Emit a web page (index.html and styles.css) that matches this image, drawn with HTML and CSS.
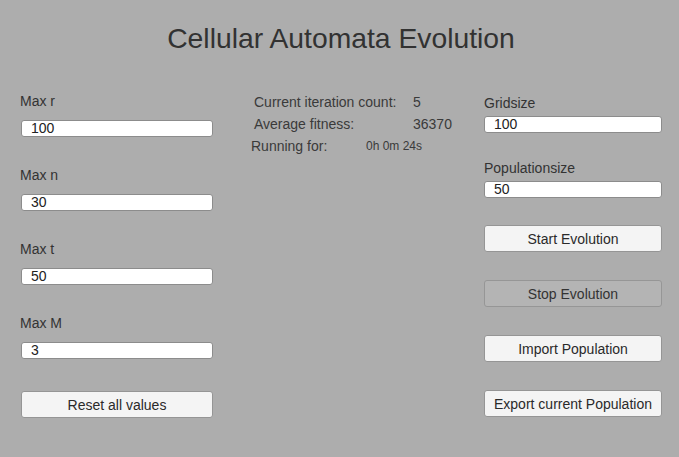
FILE: index.html
```html
<!DOCTYPE html>
<html>
<head>
<meta charset="utf-8">
<link rel="stylesheet" href="styles.css">
</head>
<body>
<div class="app">
  <h1 class="title">Cellular Automata Evolution</h1>
  <div class="main">
    <div class="col-left">
      <div class="field">
        <div class="label">Max r</div>
        <div class="input">100</div>
      </div>
      <div class="field">
        <div class="label">Max n</div>
        <div class="input">30</div>
      </div>
      <div class="field">
        <div class="label">Max t</div>
        <div class="input">50</div>
      </div>
      <div class="field">
        <div class="label">Max M</div>
        <div class="input">3</div>
      </div>
      <div class="btn btn-reset">Reset all values</div>
    </div>
    <div class="col-mid">
      <div class="stat stat-a"><span class="stat-k">Current iteration count:</span><span class="stat-v">5</span></div>
      <div class="stat stat-a"><span class="stat-k">Average fitness:</span><span class="stat-v">36370</span></div>
      <div class="stat stat-b"><span class="stat-k">Running for:</span><span class="stat-v small">0h 0m 24s</span></div>
    </div>
    <div class="col-right">
      <div class="rfield">
        <div class="label">Gridsize</div>
        <div class="input">100</div>
      </div>
      <div class="rfield">
        <div class="label">Populationsize</div>
        <div class="input">50</div>
      </div>
      <div class="buttons">
        <div class="btn">Start Evolution</div>
        <div class="btn btn-disabled">Stop Evolution</div>
        <div class="btn">Import Population</div>
        <div class="btn">Export current Population</div>
      </div>
    </div>
  </div>
</div>
</body>
</html>
```

FILE: styles.css
```css
html, body {
  margin: 0;
  padding: 0;
}
body {
  width: 679px;
  height: 457px;
  overflow: hidden;
  background: #adadad;
  font-family: "Liberation Sans", Arial, sans-serif;
  color: #333333;
}
.app {
  display: flex;
  flex-direction: column;
}
.title {
  margin: 22px 0 0;
  padding-left: 3px;
  font-size: 28.3px;
  line-height: 32px;
  font-weight: normal;
  text-align: center;
  color: #323232;
}
.main {
  display: grid;
  grid-template-columns: 193px 271px 178px;
  padding-left: 20px;
  margin-top: 39px;
}
.col-left {
  display: flex;
  flex-direction: column;
  gap: 30px;
}
.col-mid {
  display: flex;
  flex-direction: column;
  padding-left: 38px;
  padding-top: 1px;
}
.label {
  font-size: 14px;
  line-height: 16px;
  height: 16px;
}
.field .input {
  margin-top: 11px;
  margin-left: 1px;
}
.input {
  box-sizing: border-box;
  height: 17px;
  background: #ffffff;
  border: 1px solid #8c8c8c;
  border-radius: 3px;
  padding-left: 9px;
  font-size: 14px;
  line-height: 15px;
  color: #222222;
}
.btn {
  box-sizing: border-box;
  height: 27px;
  background: #f4f4f4;
  border: 1px solid #959595;
  border-radius: 3px;
  font-size: 14px;
  line-height: 26px;
  text-align: center;
  color: #2a2a2a;
}
.btn-reset {
  margin-top: 2px;
  margin-left: 1px;
}
.btn-disabled {
  background: #b4b4b4;
  border-color: #969696;
  color: #333333;
}
.stat {
  display: flex;
  height: 22px;
  font-size: 14px;
  line-height: 16px;
  color: #3a3a3a;
}
.stat-a {
  padding-left: 3px;
}
.stat-a .stat-k {
  width: 159px;
}
.stat-b .stat-k {
  width: 115px;
}
.stat-v.small {
  font-size: 12px;
}
.col-right {
  display: flex;
  flex-direction: column;
  padding-top: 2px;
}
.rfield .input {
  margin-top: 5px;
}
.rfield + .rfield {
  margin-top: 27px;
}
.buttons {
  display: flex;
  flex-direction: column;
  gap: 28px;
  margin-top: 27px;
}
```
